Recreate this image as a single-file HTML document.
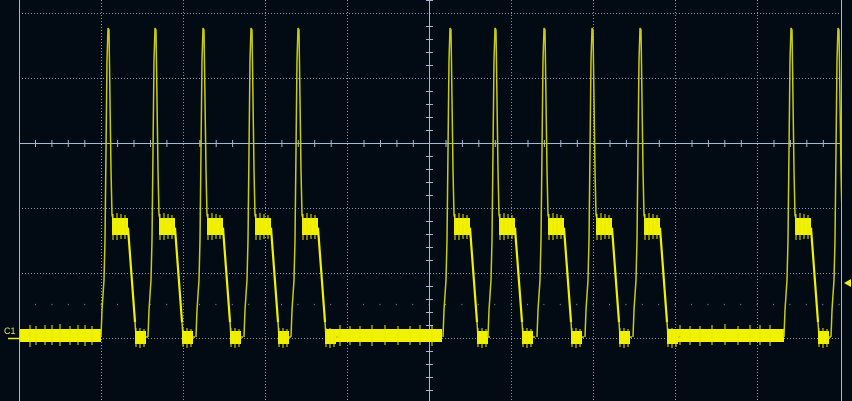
<!DOCTYPE html>
<html><head><style>
html,body{margin:0;padding:0;background:#020a14;}
svg{display:block;}
</style></head><body>
<svg width="852" height="401" viewBox="0 0 852 401" xmlns="http://www.w3.org/2000/svg">
<rect width="852" height="401" fill="#020a14"/>
<g stroke="#7f9bb8" stroke-width="1" stroke-dasharray="1 2" fill="none">
<line x1="19" y1="13.5" x2="841" y2="13.5"/>
<line x1="19" y1="78.5" x2="841" y2="78.5"/>
<line x1="19" y1="208.5" x2="841" y2="208.5"/>
<line x1="19" y1="273.5" x2="841" y2="273.5"/>
<line x1="19" y1="338.5" x2="841" y2="338.5"/>
<line x1="101.5" y1="0" x2="101.5" y2="401"/>
<line x1="183.5" y1="0" x2="183.5" y2="401"/>
<line x1="265.5" y1="0" x2="265.5" y2="401"/>
<line x1="347.5" y1="0" x2="347.5" y2="401"/>
<line x1="511.5" y1="0" x2="511.5" y2="401"/>
<line x1="593.5" y1="0" x2="593.5" y2="401"/>
<line x1="675.5" y1="0" x2="675.5" y2="401"/>
<line x1="757.5" y1="0" x2="757.5" y2="401"/>
</g>
<g stroke="#6f88a2" stroke-width="1.2" stroke-dasharray="1 15.4" fill="none">
<line x1="35" y1="304.5" x2="841" y2="304.5"/>
</g>
<g stroke="#9fbcd6" stroke-width="1" fill="none">
<line x1="19.5" y1="0" x2="19.5" y2="401"/>
<line x1="841.5" y1="0" x2="841.5" y2="401"/>
<line x1="19" y1="143.5" x2="841" y2="143.5"/>
<line x1="429.5" y1="0" x2="429.5" y2="401"/>
</g>
<g stroke="#9fbcd6" stroke-width="1">
<path d="M35.5,140v7M51.9,140v7M68.3,140v7M84.8,140v7M117.6,140v7M134,140v7M150.5,140v7M166.9,140v7M199.8,140v7M216.2,140v7M232.6,140v7M249,140v7M281.9,140v7M298.3,140v7M314.7,140v7M331.2,140v7M364,140v7M380.5,140v7M396.9,140v7M413.3,140v7M446,140v7M462.4,140v7M478.8,140v7M495.3,140v7M528,140v7M544.4,140v7M560.8,140v7M577.3,140v7M610,140v7M626.4,140v7M642.8,140v7M659.3,140v7M692,140v7M708.4,140v7M724.8,140v7M741.3,140v7M774,140v7M790.4,140v7M806.8,140v7M823.3,140v7"/>
<path d="M426,26.5h7M426,39.5h7M426,52.5h7M426,65.5h7M426,91.5h7M426,104.5h7M426,117.5h7M426,130.5h7M426,156.5h7M426,169.5h7M426,182.5h7M426,195.5h7M426,221.5h7M426,234.5h7M426,247.5h7M426,260.5h7M426,286.5h7M426,299.5h7M426,312.5h7M426,325.5h7M426,351.5h7M426,364.5h7M426,377.5h7M426,390.5h7M426,0.5h7"/>
</g>
<defs>
<clipPath id="c"><rect x="20" y="0" width="821" height="401"/></clipPath>
<g id="p">
<path d="M-7,337 L-6,310 L-4,280 L-3,240 L-2,150 L-1,60 L0,28 L1,30 L2,100 L3,170 L4,215 L6,222 L20,228 L27,322 L28,337 L40,337" fill="none" stroke="#c8cc10" stroke-width="1.5"/>
<rect x="4" y="218" width="16" height="17" fill="#f2f200"/>
<path d="M5,214v26M9,213v27M13,214v25M17,215v24" stroke="#e8e800" stroke-width="1"/>
<rect x="27" y="331" width="11" height="13" fill="#f2f200"/>
<path d="M28,328v19M32,328v20M36,329v18" stroke="#e8e800" stroke-width="1"/>
<path d="M20,228 L27,322" fill="none" stroke="#f0f000" stroke-width="2.2"/>
</g>
</defs>
<g clip-path="url(#c)">
<rect x="20" y="329" width="81" height="13" fill="#f2f200"/>
<rect x="326" y="329" width="116" height="13" fill="#f2f200"/>
<rect x="667" y="329" width="117" height="13" fill="#f2f200"/>
<g stroke="#e8e800" stroke-width="1">
<path d="M30,325v22M45,325v20M60,324v22M78,325v20M92,326v19M36,326v19M52,325v20M70,326v19M85,325v21M340,325v21M360,326v20M385,325v20M410,326v19M432,325v21M350,326v19M372,325v21M398,326v19M420,325v20M680,325v20M700,326v20M725,324v21M750,325v20M770,325v21M690,326v19M712,325v20M738,326v19M760,325v20"/>
</g>
<use href="#p" x="108"/><use href="#p" x="155"/><use href="#p" x="203"/><use href="#p" x="251"/><use href="#p" x="298"/>
<use href="#p" x="450"/><use href="#p" x="495"/><use href="#p" x="544"/><use href="#p" x="592"/><use href="#p" x="640"/>
<use href="#p" x="791"/><use href="#p" x="838"/>
</g>
<text x="4" y="334" font-family="Liberation Sans, sans-serif" font-size="9" fill="#e8ec60">C1</text>
<line x1="8" y1="338.5" x2="20" y2="338.5" stroke="#e8ec20" stroke-width="1.5"/>
<polygon points="844,283 851,279 851,287" fill="#f0f000"/>
</svg>
</body></html>
